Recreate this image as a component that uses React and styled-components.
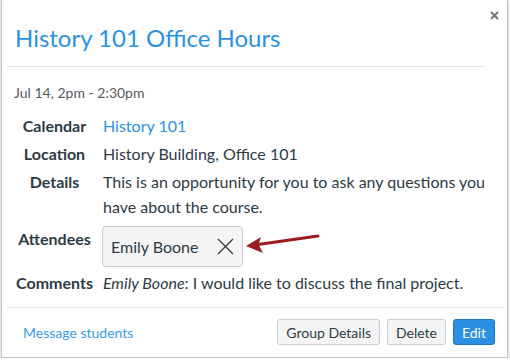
import React from 'react';
import styled, { createGlobalStyle } from 'styled-components';

const GlobalStyle = createGlobalStyle`
  html, body {
    margin: 0;
    padding: 0;
    background: #fff;
  }
  body {
    font-family: Lato, "Noto Sans", sans-serif;
    color: #2d3b45;
  }
`;

const Card = styled.div`
  position: relative;
  box-sizing: border-box;
  margin-left: 1px;
  width: 507px;
  height: 358px;
  background: #fff;
  border: 1px solid #c4c4c4;
  border-top: none;
  box-shadow: 0 1px 3px rgba(0, 0, 0, 0.25);
  display: flex;
  flex-direction: column;
`;

const Close = styled.button`
  position: absolute;
  left: 488px;
  top: 11px;
  width: 9px;
  height: 9px;
  padding: 0;
  border: none;
  background: none;
  display: flex;
`;

const Header = styled.div`
  padding: 23px 0 0 13px;
`;

const Title = styled.h2`
  margin: 0;
  font-size: 24px;
  line-height: 30px;
  font-weight: 400;
  color: #2b92e4;
`;

const Divider = styled.hr`
  margin: ${p => p.$margin};
  border: none;
  height: 1px;
  background: #e6e6e6;
`;

const Body = styled.div`
  padding: 0 0 0 12px;
  flex: 1;
`;

const When = styled.div`
  margin-top: 16px;
  font-size: 14px;
  line-height: 20px;
  color: #555b60;
`;

const Details = styled.div`
  display: grid;
  grid-template-columns: 81px 1fr;
  column-gap: 7px;
  row-gap: 3px;
  margin-top: 10px;
  font-size: 16px;
  line-height: 25px;
`;

const Label = styled.div`
  font-weight: 700;
  text-align: center;
  margin-top: ${p => p.$push || 0}px;
`;

const Value = styled.div`
  margin-top: ${p => p.$push || 0}px;
  padding-left: ${p => (p.$chip ? 0 : 1)}px;
  padding-right: 12px;
  a {
    color: #2b92e4;
    text-decoration: none;
  }
  em {
    font-style: italic;
  }
`;

const Chip = styled.div`
  box-sizing: border-box;
  display: inline-flex;
  align-items: center;
  gap: 18px;
  height: 41px;
  padding: 0 8px 0 8px;
  background: #f5f5f5;
  border: 1px solid #c7cdd1;
  border-radius: 4px;
  font-size: 16px;
`;

const Remove = styled.span`
  display: flex;
  width: 17px;
  height: 17px;
`;

const Footer = styled.div`
  display: flex;
  align-items: center;
  padding: 11px 12px 12px 21px;
`;

const FooterLink = styled.a`
  flex: 1;
  font-size: 14px;
  color: #3a9ceb;
  text-decoration: none;
`;

const Actions = styled.div`
  display: flex;
  gap: 7px;
`;

const Button = styled.button`
  box-sizing: border-box;
  height: 26px;
  padding: 0 8px;
  font-family: Lato, "Noto Sans", sans-serif;
  font-size: 14px;
  border-radius: 3px;
  border: 1px solid ${p => (p.$primary ? '#1c76c2' : '#c7cdd1')};
  background: ${p => (p.$primary ? '#2b8fe2' : '#f5f5f5')};
  color: ${p => (p.$primary ? '#fff' : '#2d3b45')};
`;

const Pointer = styled.svg`
  position: absolute;
  left: 240px;
  top: 228px;
`;

function App() {
  return (
    <>
      <GlobalStyle />
      <Card>
        <Close aria-label="Close">
          <svg width="9" height="9" viewBox="0 0 9 9">
            <path d="M1 1 L8 8 M8 1 L1 8" stroke="#777" strokeWidth="2" />
          </svg>
        </Close>
        <Header>
          <Title>History 101 Office Hours</Title>
        </Header>
        <Divider $margin="13px 22px 0 5px" />
        <Body>
          <When>Jul 14, 2pm - 2:30pm</When>
          <Details>
            <Label>Calendar</Label>
            <Value><a href="#">History 101</a></Value>
            <Label>Location</Label>
            <Value>History Building, Office 101</Value>
            <Label>Details</Label>
            <Value>This is an opportunity for you to ask any questions you have about the course.</Value>
            <Label $push={4}>Attendees</Label>
            <Value $push={4} $chip>
              <Chip>
                Emily Boone
                <Remove>
                  <svg width="17" height="17" viewBox="0 0 17 17">
                    <path d="M1 1 L16 16 M16 1 L1 16" stroke="#3a3f44" strokeWidth="1.4" />
                  </svg>
                </Remove>
              </Chip>
            </Value>
            <Label>Comments</Label>
            <Value><em>Emily Boone</em>: I would like to discuss the final project.</Value>
          </Details>
        </Body>
        <Divider $margin="0 4px 0 5px" />
        <Footer>
          <FooterLink href="#">Message students</FooterLink>
          <Actions>
            <Button>Group Details</Button>
            <Button>Delete</Button>
            <Button $primary>Edit</Button>
          </Actions>
        </Footer>
        <Pointer width="82" height="26" viewBox="0 0 82 26">
          <line x1="76" y1="8" x2="16" y2="16.5" stroke="#9b1b1f" strokeWidth="3" strokeLinecap="round" />
          <polygon points="4,18 19,9 16.5,16.5 21,25" fill="#9b1b1f" />
        </Pointer>
      </Card>
    </>
  );
}

export default App;
